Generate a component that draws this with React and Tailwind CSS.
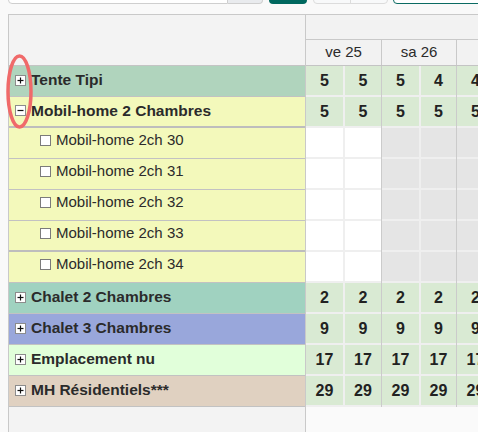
import React from "react";

const groups = [
  { name: "Tente Tipi", bg: "bg-[#b0d4bd]", open: false, values: ["5", "5", "5", "4", "4"] },
  {
    name: "Mobil-home 2 Chambres",
    bg: "bg-[#f3f9bb]",
    open: true,
    values: ["5", "5", "5", "5", "5"],
    units: ["Mobil-home 2ch 30", "Mobil-home 2ch 31", "Mobil-home 2ch 32", "Mobil-home 2ch 33", "Mobil-home 2ch 34"],
  },
  { name: "Chalet 2 Chambres", bg: "bg-[#a0d2c0]", open: false, values: ["2", "2", "2", "2", "2"] },
  { name: "Chalet 3 Chambres", bg: "bg-[#99a7db]", open: false, values: ["9", "9", "9", "9", "9"] },
  { name: "Emplacement nu", bg: "bg-[#e1ffda]", open: false, values: ["17", "17", "17", "17", "17"] },
  { name: "MH Résidentiels***", bg: "bg-[#e0d1c1]", open: false, values: ["29", "29", "29", "29", "29"] },
];

const dayWidths = ["w-[76px]", "w-[75px]", "w-[75px]"];

function ToggleBox({ open }) {
  return (
    <svg width="11" height="11" viewBox="0 0 11 11" className="shrink-0">
      <rect x="0.5" y="0.5" width="10" height="10" fill="#fff" stroke="#8c8c8c" />
      <line x1="2.5" y1="5.5" x2="8.5" y2="5.5" stroke="#111" strokeWidth="1.2" />
      {!open && <line x1="5.5" y1="2.5" x2="5.5" y2="8.5" stroke="#111" strokeWidth="1.2" />}
    </svg>
  );
}

function DataRow({ values, unit }) {
  return (
    <div className="flex h-[31px]">
      {dayWidths.map((w, d) => (
        <div key={d} className={`${w} shrink-0 flex border-r border-[#cbcbcb]`}>
          {[0, 1].map((k) => {
            const i = d * 2 + k;
            const bg = unit ? (d === 0 ? "bg-white" : "bg-[#e5e5e5]") : "bg-[#d9ead3]";
            return (
              <div
                key={k}
                className={`${bg} ${k === 0 ? "w-[39px] border-r-2" : "flex-1"} border-b-2 border-[#efefef] flex items-center justify-center font-bold text-[16px] text-[#222]`}
              >
                {!unit && values[i]}
              </div>
            );
          })}
        </div>
      ))}
    </div>
  );
}

export default function App() {
  return (
    <div className="relative w-[478px] h-[432px] overflow-hidden bg-[#f9f9f9] font-['Liberation_Sans',Arial,sans-serif] text-[#2b2b2b]">
      {/* toolbar, mostly scrolled off */}
      <div className="h-[4px] overflow-hidden flex items-end pl-[8px]">
        <div className="flex h-[30px] shrink-0">
          <div className="w-[220px] bg-white border border-[#cfcfcf] rounded-bl-[4px]" />
          <div className="w-[35px] bg-[#e9ebee] border border-l-0 border-[#cfcfcf] rounded-br-[4px]" />
        </div>
        <div className="ml-[6px] w-[38px] h-[30px] bg-[#00685f] rounded-[4px] shrink-0" />
        <div className="ml-[6px] flex h-[30px] shrink-0 border border-[#dcdcdc] rounded-[4px] bg-[#f8f9fa]">
          <div className="w-[37px] border-r border-[#dcdcdc]" />
          <div className="w-[36px]" />
        </div>
        <div className="ml-[5px] w-[120px] h-[30px] bg-white border border-[#0b6b63] rounded-[4px] shrink-0" />
      </div>

      <div className="mt-[10px] ml-[8px] h-[418px] flex border-t border-l border-[#c9c9c9]">
        {/* left column */}
        <div className="w-[297px] shrink-0 bg-[#f3f3f3] border-r border-[#c9c9c9]">
          <div className="h-[51px] border-b border-[#c4c4c4]" />
          {groups.map((g) => (
            <React.Fragment key={g.name}>
              <div
                className={`${g.bg} h-[31px] flex items-center gap-[5px] pl-[6px] pb-[2px] font-bold text-[15.5px] ${g.open ? "border-b-2 border-[#bdbdbd]" : "border-b border-[#c2c2c2]"}`}
              >
                <ToggleBox open={g.open} />
                <span>{g.name}</span>
              </div>
              {g.units &&
                g.units.map((u, i) => (
                  <div
                    key={u}
                    className={`${g.bg} h-[31px] flex items-center gap-[5px] pl-[31px] pb-[5px] text-[15px] ${i === 3 ? "border-b-2 border-[#bdbdbd]" : "border-b border-[#c2c2c2]"}`}
                  >
                    <span className="w-[11px] h-[11px] border border-[#7b7b7b] bg-white shrink-0" />
                    <span>{u}</span>
                  </div>
                ))}
            </React.Fragment>
          ))}
        </div>

        {/* planning grid */}
        <div className="flex-1 overflow-hidden bg-[#fafafa]">
          <div className="h-[51px] bg-[#f2f2f2] border-b border-[#c4c4c4]">
            <div className="h-[25px] border-b border-[#c9c9c9]" />
            <div className="flex h-[25px]">
              {["ve 25", "sa 26", "di 27"].map((d, i) => (
                <div
                  key={d}
                  className={`${dayWidths[i]} shrink-0 border-r border-[#c9c9c9] flex items-center justify-center text-[15px] text-[#2b2b2b]`}
                >
                  {i < 2 ? d : ""}
                </div>
              ))}
            </div>
          </div>
          {groups.map((g) => (
            <React.Fragment key={g.name}>
              <DataRow values={g.values} />
              {g.units && g.units.map((u) => <DataRow key={u} unit />)}
            </React.Fragment>
          ))}
        </div>
      </div>

      {/* red highlight around the expand toggles */}
      <svg className="absolute left-0 top-0 pointer-events-none" width="40" height="140">
        <ellipse cx="19.5" cy="91.5" rx="11.5" ry="35.5" fill="none" stroke="#f06a6a" strokeWidth="3.5" />
      </svg>
    </div>
  );
}
